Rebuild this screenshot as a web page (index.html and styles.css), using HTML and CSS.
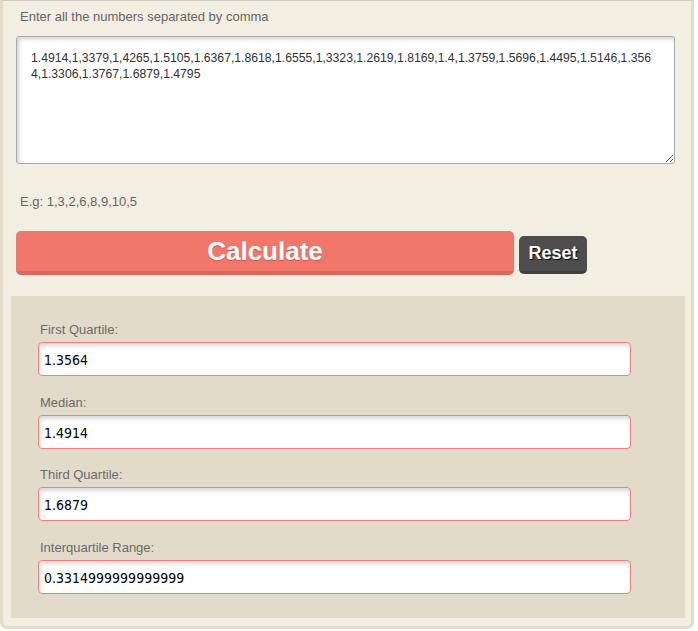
FILE: index.html
```html
<!DOCTYPE html>
<html lang="en">
<head>
<meta charset="utf-8">
<title>Quartile Calculator</title>
<link rel="stylesheet" href="styles.css">
</head>
<body>
<div class="calc">
  <div class="top">
    <label class="prompt" for="nums">Enter all the numbers separated by comma</label>
    <textarea id="nums" class="nums">1.4914,1,3379,1,4265,1.5105,1.6367,1.8618,1.6555,1,3323,1.2619,1.8169,1.4,1.3759,1.5696,1.4495,1.5146,1.356
4,1.3306,1.3767,1.6879,1.4795</textarea>
    <p class="example">E.g: 1,3,2,6,8,9,10,5</p>
    <div class="actions">
      <button class="btn btn-calc" type="button">Calculate</button>
      <button class="btn btn-reset" type="button">Reset</button>
    </div>
  </div>
  <div class="results">
    <div class="field">
      <label class="field-label">First Quartile:</label>
      <input class="field-input" type="text" value="1.3564">
    </div>
    <div class="field">
      <label class="field-label">Median:</label>
      <input class="field-input" type="text" value="1.4914">
    </div>
    <div class="field">
      <label class="field-label">Third Quartile:</label>
      <input class="field-input" type="text" value="1.6879">
    </div>
    <div class="field">
      <label class="field-label">Interquartile Range:</label>
      <input class="field-input" type="text" value="0.3314999999999999">
    </div>
  </div>
</div>
</body>
</html>
```

FILE: styles.css
```css
* { box-sizing: border-box; }

body {
  margin: 0;
  background: #ffffff;
  font-family: "Liberation Sans", Arial, sans-serif;
}

.calc {
  width: 694px;
  background: #f2eee2;
  border: 3px solid #e3dccb;
  border-top: 1px solid #cfcbc2;
  border-radius: 0 0 7px 7px;
  padding-bottom: 8px;
}

.top {
  padding: 8px 13px 0 13px;
}

.prompt {
  display: block;
  font-size: 13px;
  line-height: 15px;
  color: #666;
  padding-left: 4px;
}

.nums {
  display: block;
  margin-top: 12px;
  width: 659px;
  height: 128px;
  border: 1px solid #a9a9a9;
  border-radius: 3px;
  background: #fff;
  box-shadow: inset 2px 2px 4px rgba(0, 0, 0, 0.18);
  padding: 13px 2px 0 14px;
  font-family: "Liberation Sans", Arial, sans-serif;
  font-size: 12.2px;
  line-height: 16px;
  color: #333;
  white-space: pre;
  overflow: hidden;
  resize: both;
}

.example {
  margin: 30px 0 0 0;
  padding-left: 4px;
  font-size: 13px;
  line-height: 15px;
  color: #666;
}

.actions {
  margin-top: 22px;
  display: flex;
  align-items: flex-end;
  gap: 5px;
}

.btn {
  border: none;
  color: #fff;
  font-family: "Liberation Sans", Arial, sans-serif;
  font-weight: bold;
  border-radius: 5px;
  padding: 0;
  cursor: pointer;
}

.btn-calc {
  width: 498px;
  height: 44px;
  background: #f2776b;
  border-bottom: 4px solid #da6a5f;
  font-size: 26px;
  text-shadow: 0 1px 1px rgba(120, 40, 30, 0.35);
}

.btn-reset {
  width: 68px;
  height: 38px;
  margin-bottom: 1px;
  background: #4d4d4d;
  border-bottom: 3px solid #424242;
  font-size: 18px;
  text-shadow: 1px 1px 1px #000;
}

.results {
  margin: 21px 6px 0 8px;
  background: #e2dbca;
  padding: 26px 27px 24.5px 27px;
  display: flex;
  flex-direction: column;
  gap: 18.5px;
}

.field-label {
  display: block;
  padding-left: 2px;
  font-size: 13px;
  line-height: 15px;
  color: #6a6a6a;
}

.field-input {
  display: block;
  margin-top: 5px;
  width: 593px;
  height: 34px;
  border: 1px solid #f08080;
  border-radius: 4px;
  background: #fff;
  box-shadow: inset 1px 3px 4px rgba(0, 0, 0, 0.15);
  padding: 2px 5px 0 5px;
  font-family: "DejaVu Sans Condensed", "DejaVu Sans", sans-serif;
  font-stretch: condensed;
  font-size: 14px;
  color: #000;
  outline: none;
}
```
